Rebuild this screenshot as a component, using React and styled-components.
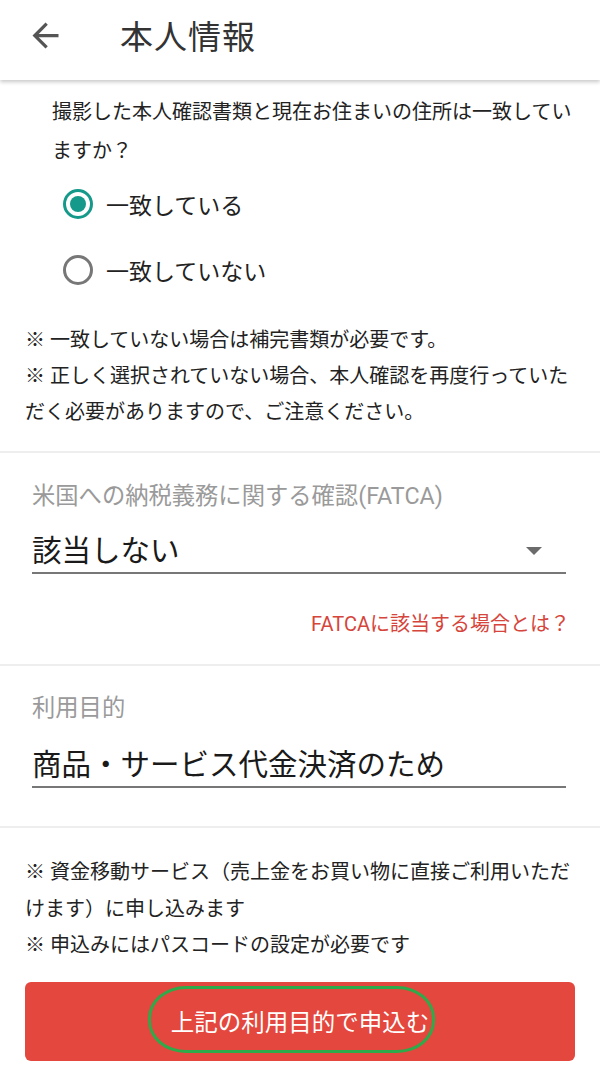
import React, { useState } from 'react';
import styled, { createGlobalStyle } from 'styled-components';

const GlobalStyle = createGlobalStyle`
  body {
    margin: 0;
    background: #fff;
    font-family: Roboto, "Noto Sans CJK JP", sans-serif;
    color: #222;
  }
`;

const Page = styled.div`
  width: 600px;
  min-height: 1065px;
  background: #fff;
`;

const Header = styled.header`
  height: 80px;
  box-sizing: border-box;
  padding-bottom: 10px;
  display: flex;
  align-items: center;
  background: #fff;
  box-shadow: 0 2px 4px rgba(0, 0, 0, 0.22);
  position: relative;
  z-index: 1;
`;

const BackButton = styled.button`
  width: 60px;
  height: 60px;
  margin-left: 15px;
  padding: 0;
  border: 0;
  background: transparent;
  display: flex;
  align-items: center;
  justify-content: center;
  color: #555;
`;

const Title = styled.h1`
  margin: 0 0 0 45px;
  font-size: 33px;
  font-weight: 400;
  color: #333;
  letter-spacing: 1px;
`;

const Section = styled.section`
  padding: ${({ $pad }) => $pad};
  border-bottom: ${({ $divider }) => ($divider ? '2px solid #eeeeee' : 'none')};
`;

const Question = styled.p`
  margin: 0 0 0 27px;
  font-size: 20px;
  line-height: 39px;
  color: #222;
`;

const RadioRow = styled.label`
  height: 66px;
  display: flex;
  align-items: center;
  margin-left: 38px;
  font-size: 23px;
  color: #222;
  cursor: pointer;
`;

const RadioCircle = styled.span`
  width: 30px;
  height: 30px;
  box-sizing: border-box;
  border-radius: 50%;
  border: 3px solid ${({ $on }) => ($on ? '#15998a' : '#777')};
  display: flex;
  align-items: center;
  justify-content: center;
  margin-right: 13px;

  &::after {
    content: '';
    width: 16px;
    height: 16px;
    border-radius: 50%;
    background: ${({ $on }) => ($on ? '#15998a' : 'transparent')};
  }
`;

const Notes = styled.div`
  margin-top: ${({ $top }) => $top || '0'};
  font-size: 20px;
  line-height: ${({ $lh }) => $lh || '36px'};
  color: #222;
`;

const NoteLine = styled.div``;

const FieldLabel = styled.div`
  font-size: 23.3px;
  line-height: 30px;
  color: #9a9a9a;
`;

const Field = styled.div`
  margin-top: ${({ $top }) => $top};
  display: flex;
  align-items: center;
  justify-content: space-between;
  border-bottom: 2px solid #777;
  padding-bottom: 1px;
`;

const FieldValue = styled.div`
  font-size: 29.5px;
  line-height: 40px;
  color: #1a1a1a;
`;

const Caret = styled.span`
  width: 0;
  height: 0;
  margin-right: 24px;
  border-left: 8px solid transparent;
  border-right: 8px solid transparent;
  border-top: 8px solid #6b6b6b;
`;

const LinkRow = styled.div`
  margin-top: 35px;
  text-align: right;
`;

const HelpLink = styled.a`
  font-size: 20px;
  line-height: 30px;
  color: #d6453b;
  text-decoration: none;
  margin-right: -4px;
`;

const Footer = styled.div`
  padding: 26px 25px 0;
`;

const SubmitButton = styled.button`
  position: relative;
  margin-top: 18px;
  width: 100%;
  height: 79px;
  border: 0;
  border-radius: 6px;
  background: #e4473d;
  color: #fff;
  font-family: Roboto, "Noto Sans CJK JP", sans-serif;
  font-size: 23.5px;
  display: flex;
  align-items: center;
  justify-content: center;
`;

const Highlight = styled.span`
  position: absolute;
  left: 123px;
  top: 4px;
  width: 287px;
  height: 67px;
  box-sizing: border-box;
  border: 3px solid #2faa4a;
  border-radius: 38px / 32px;
  pointer-events: none;
`;

const ArrowBack = () => (
  <svg width="39" height="39" viewBox="0 0 24 24" fill="currentColor">
    <path d="M20 11H7.83l5.59-5.59L12 4l-8 8 8 8 1.41-1.41L7.83 13H20v-2z" />
  </svg>
);

export default function App() {
  const [match, setMatch] = useState(true);

  return (
    <Page>
      <GlobalStyle />
      <Header>
        <BackButton aria-label="戻る">
          <ArrowBack />
        </BackButton>
        <Title>本人情報</Title>
      </Header>

      <Section $pad="13px 25px 21px" $divider>
        <Question>撮影した本人確認書類と現在お住まいの住所は一致していますか？</Question>
        <RadioRow onClick={() => setMatch(true)}>
          <RadioCircle $on={match} />
          一致している
        </RadioRow>
        <RadioRow onClick={() => setMatch(false)}>
          <RadioCircle $on={!match} />
          一致していない
        </RadioRow>
        <Notes $top="19px">
          <NoteLine>※ 一致していない場合は補完書類が必要です。</NoteLine>
          <NoteLine>※ 正しく選択されていない場合、本人確認を再度行っていただく必要がありますので、ご注意ください。</NoteLine>
        </Notes>
      </Section>

      <Section $pad="28px 34px 25px 32px" $divider>
        <FieldLabel>米国への納税義務に関する確認(FATCA)</FieldLabel>
        <Field $top="20px">
          <FieldValue>該当しない</FieldValue>
          <Caret />
        </Field>
        <LinkRow>
          <HelpLink href="#">FATCAに該当する場合とは？</HelpLink>
        </LinkRow>
      </Section>

      <Section $pad="27px 34px 38px 32px" $divider>
        <FieldLabel>利用目的</FieldLabel>
        <Field $top="22px">
          <FieldValue>商品・サービス代金決済のため</FieldValue>
        </Field>
      </Section>

      <Footer>
        <Notes $lh="36.5px">
          <NoteLine>※ 資金移動サービス（売上金をお買い物に直接ご利用いただけます）に申し込みます</NoteLine>
          <NoteLine>※ 申込みにはパスコードの設定が必要です</NoteLine>
        </Notes>
        <SubmitButton>
          上記の利用目的で申込む
          <Highlight />
        </SubmitButton>
      </Footer>
    </Page>
  );
}
